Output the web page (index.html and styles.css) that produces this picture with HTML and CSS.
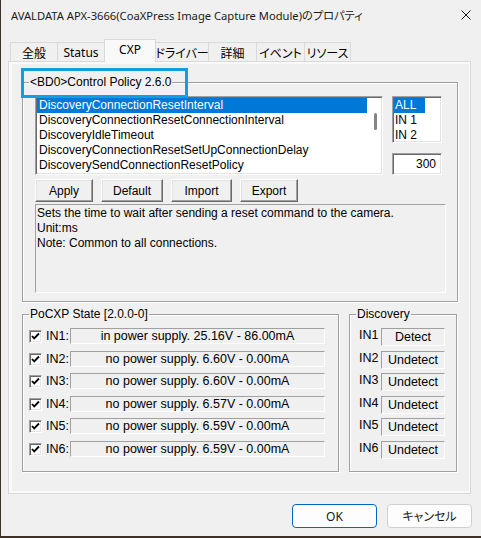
FILE: index.html
```html
<!DOCTYPE html>
<html lang="ja">
<head>
    <meta charset="UTF-8">
    <meta name="viewport" content="width=device-width, initial-scale=1.0">
    <title>AVALDATA APX-3666(CoaXPress Image Capture Module)のプロパティ</title>
    <link rel="stylesheet" href="styles.css">
</head>
<body>
    <div class="window">
        <div class="titlebar">
            <span class="title">AVALDATA APX-3666(CoaXPress Image Capture Module)のプロパティ</span>
            <span class="close">
                <svg width="10" height="10" viewBox="0 0 10 10"><path d="M0.5 0.5L9.5 9.5M9.5 0.5L0.5 9.5" stroke="#1a1a1a" stroke-width="1" fill="none"/></svg>
            </span>
        </div>

        <div class="tabs">
            <div class="tab w-general">全般</div>
            <div class="tab w-status">Status</div>
            <div class="tab active w-cxp">CXP</div>
            <div class="tab w-driver">ドライバー</div>
            <div class="tab w-detail">詳細</div>
            <div class="tab w-event">イベント</div>
            <div class="tab w-resource">リソース</div>
        </div>

        <div class="sheet">
            <div class="page">
                <fieldset class="group policy">
                    <legend class="marked">&lt;BD0&gt;Control Policy 2.6.0</legend>
                    <div class="policy-top">
                        <div class="listbox params">
                            <div class="items">
                                <div class="item selected">DiscoveryConnectionResetInterval</div>
                                <div class="item">DiscoveryConnectionResetConnectionInterval</div>
                                <div class="item">DiscoveryIdleTimeout</div>
                                <div class="item">DiscoveryConnectionResetSetUpConnectionDelay</div>
                                <div class="item">DiscoverySendConnectionResetPolicy</div>
                            </div>
                            <div class="vscroll"><div class="thumb"></div></div>
                        </div>
                        <div class="side">
                            <div class="listbox ports">
                                <div class="items">
                                    <div class="item selected">ALL</div>
                                    <div class="item">IN 1</div>
                                    <div class="item">IN 2</div>
                                </div>
                            </div>
                            <div class="edit">300</div>
                        </div>
                    </div>
                    <div class="actions">
                        <button class="btn w-apply">Apply</button>
                        <button class="btn w-default">Default</button>
                        <button class="btn w-import">Import</button>
                        <button class="btn w-export">Export</button>
                    </div>
                    <div class="desc">
                        Sets the time to wait after sending a reset command to the camera.<br>
                        Unit:ms<br>
                        Note: Common to all connections.
                    </div>
                </fieldset>

                <div class="lower">
                    <fieldset class="group pocxp">
                        <legend>PoCXP State [2.0.0-0]</legend>
                        <div class="rows">
                            <div class="row"><span class="check"><svg width="11" height="11" viewBox="0 0 11 11"><path d="M2 5L4.2 7.4L9 2.5" stroke="#000" stroke-width="1.8" fill="none"/></svg></span><span class="in-label">IN1:</span><span class="field wide">in power supply. 25.16V - 86.00mA</span></div>
                            <div class="row"><span class="check"><svg width="11" height="11" viewBox="0 0 11 11"><path d="M2 5L4.2 7.4L9 2.5" stroke="#000" stroke-width="1.8" fill="none"/></svg></span><span class="in-label">IN2:</span><span class="field wide">no power supply. 6.60V - 0.00mA</span></div>
                            <div class="row"><span class="check"><svg width="11" height="11" viewBox="0 0 11 11"><path d="M2 5L4.2 7.4L9 2.5" stroke="#000" stroke-width="1.8" fill="none"/></svg></span><span class="in-label">IN3:</span><span class="field wide">no power supply. 6.60V - 0.00mA</span></div>
                            <div class="row"><span class="check"><svg width="11" height="11" viewBox="0 0 11 11"><path d="M2 5L4.2 7.4L9 2.5" stroke="#000" stroke-width="1.8" fill="none"/></svg></span><span class="in-label">IN4:</span><span class="field wide">no power supply. 6.57V - 0.00mA</span></div>
                            <div class="row"><span class="check"><svg width="11" height="11" viewBox="0 0 11 11"><path d="M2 5L4.2 7.4L9 2.5" stroke="#000" stroke-width="1.8" fill="none"/></svg></span><span class="in-label">IN5:</span><span class="field wide">no power supply. 6.59V - 0.00mA</span></div>
                            <div class="row"><span class="check"><svg width="11" height="11" viewBox="0 0 11 11"><path d="M2 5L4.2 7.4L9 2.5" stroke="#000" stroke-width="1.8" fill="none"/></svg></span><span class="in-label">IN6:</span><span class="field wide">no power supply. 6.59V - 0.00mA</span></div>
                        </div>
                    </fieldset>

                    <fieldset class="group discovery">
                        <legend>Discovery</legend>
                        <div class="rows">
                            <div class="row"><span class="port">IN1</span><span class="field narrow">Detect</span></div>
                            <div class="row"><span class="port">IN2</span><span class="field narrow">Undetect</span></div>
                            <div class="row"><span class="port">IN3</span><span class="field narrow">Undetect</span></div>
                            <div class="row"><span class="port">IN4</span><span class="field narrow">Undetect</span></div>
                            <div class="row"><span class="port">IN5</span><span class="field narrow">Undetect</span></div>
                            <div class="row"><span class="port">IN6</span><span class="field narrow">Undetect</span></div>
                        </div>
                    </fieldset>
                </div>
            </div>
        </div>

        <div class="footer">
            <button class="dlg-btn default">OK</button>
            <button class="dlg-btn">キャンセル</button>
        </div>
    </div>
</body>
</html>
```

FILE: styles.css
```css
* {
    box-sizing: border-box;
}
body {
    margin: 0;
    background-color: #3e3128;
    font-family: "Liberation Sans", Arial, sans-serif;
    font-size: 12px;
    color: #000;
}
.window {
    margin-left: 1px;
    width: 480px;
    height: 536px;
    background-color: #f0f0f0;
    display: flex;
    flex-direction: column;
}

/* title bar */
.titlebar {
    height: 30px;
    display: flex;
    align-items: center;
    padding: 0 10px 0 10px;
    font-family: "Noto Sans", "Noto Sans CJK JP", sans-serif;
    font-size: 11.2px;
    font-feature-settings: "palt";
    color: #1a1a1a;
}
.title {
    flex: 1;
    white-space: nowrap;
}
.close {
    display: flex;
    width: 10px;
    height: 10px;
}

/* tab strip */
.tabs {
    display: flex;
    align-items: flex-end;
    height: 23px;
    margin-top: 9px;
    padding-left: 9px;
    font-family: "Noto Sans", "Noto Sans CJK JP", sans-serif;
    font-size: 12px;
    font-feature-settings: "palt";
    position: relative;
    z-index: 1;
}
.tab {
    flex-shrink: 0;
    height: 19px;
    margin-bottom: 1px;
    margin-right: -1px;
    border: 1px solid #d9d9d9;
    border-bottom: none;
    background-color: #f0f0f0;
    display: flex;
    align-items: center;
    justify-content: center;
    padding-top: 1px;
    white-space: nowrap;
}
.tab.active {
    height: 23px;
    margin-bottom: 0;
    background-color: #f9f9f9;
    padding-top: 0;
    padding-bottom: 3px;
    position: relative;
    z-index: 2;
}
.w-general { width: 48px; }
.w-status { width: 48px; }
.w-cxp { width: 52px; }
.w-driver { width: 54px; }
.w-detail { width: 49px; }
.w-event { width: 49px; }
.w-resource { width: 47px; }

/* property sheet */
.sheet {
    margin-top: -1px;
    margin-left: 7px;
    width: 463px;
    height: 433px;
    border: 1px solid #d9d9d9;
    background-color: #f9f9f9;
    padding: 2px 1px 2px 3px;
}
.page {
    height: 100%;
    background-color: #f0f0f0;
    padding: 11px 0 0 10px;
}

/* group boxes */
.group {
    margin: 0;
    border: 1px solid #a0a0a0;
    box-shadow: 1px 1px 0 #fff, inset 1px 1px 0 #fff;
    min-width: 0;
}
.group legend {
    padding: 0 1px;
    line-height: 14px;
    font-size: 12px;
}
.policy {
    width: 436px;
    padding: 7px 11px 8px 12px;
}
.policy legend {
    margin-left: -6px;
    position: relative;
}
.marked::before {
    content: "";
    position: absolute;
    left: -8px;
    top: -7px;
    width: 161px;
    height: 24px;
    border: 3px solid #139ee0;
}

.policy-top {
    display: flex;
    gap: 9px;
}
.listbox {
    background-color: #fff;
    border: 1px solid;
    border-color: #a0a0a0 #fff #fff #a0a0a0;
    box-shadow: inset 1px 1px 0 #696969, inset -1px -1px 0 #e3e3e3;
    padding: 1px;
    display: flex;
}
.params {
    width: 348px;
    height: 79px;
}
.params .items {
    flex: 1;
    overflow: hidden;
}
.item {
    height: 15px;
    line-height: 15px;
    padding-left: 2px;
    white-space: nowrap;
}
.item.selected {
    background-color: #0078d7;
    color: #fff;
}
.vscroll {
    width: 14px;
    padding: 15px 0 0 7px;
}
.thumb {
    width: 3px;
    height: 17px;
    border-radius: 2px;
    background-color: #858585;
}
.side {
    width: 50px;
    display: flex;
    flex-direction: column;
}
.ports {
    height: 47px;
}
.ports .items {
    width: 31px;
}
.ports .item {
    padding-left: 1px;
}
.edit {
    margin-top: 10px;
    height: 22px;
    background-color: #fff;
    border: 1px solid;
    border-color: #a0a0a0 #fff #fff #a0a0a0;
    box-shadow: inset 1px 1px 0 #696969, inset -1px -1px 0 #e3e3e3;
    text-align: right;
    padding-right: 5px;
    line-height: 20px;
}

.actions {
    display: flex;
    gap: 8px;
    margin-top: 4px;
}
.btn {
    height: 23px;
    font-family: "Liberation Sans", Arial, sans-serif;
    font-size: 12px;
    color: #000;
    background-color: #f0f0f0;
    border: 1px solid;
    border-color: #fff #696969 #696969 #fff;
    box-shadow: inset -1px -1px 0 #a0a0a0, inset 1px 1px 0 #e3e3e3;
    padding: 0;
}
.w-apply { width: 58px; }
.w-default { width: 62px; }
.w-import { width: 61px; }
.w-export { width: 58px; }

.desc {
    margin-top: 2px;
    width: 411px;
    height: 89px;
    border: 1px solid;
    border-color: #a0a0a0 #fff #fff #a0a0a0;
    padding: 1px 1px;
    line-height: 15px;
}

/* PoCXP / Discovery */
.lower {
    display: flex;
    gap: 10px;
    margin-top: 5px;
}
.pocxp {
    width: 317px;
    height: 165px;
    padding: 7px 13px 0 6px;
}
.discovery {
    width: 108px;
    height: 165px;
    padding: 7px 0 0 9px;
}
.discovery legend {
    margin-left: -3px;
}
.rows {
    display: flex;
    flex-direction: column;
}
.pocxp .rows {
    gap: 6px;
}
.discovery .rows {
    gap: 4px;
}
.rows .row:nth-child(odd) {
    margin-bottom: 1px;
}
.row {
    display: flex;
    align-items: center;
}
.pocxp .row {
    height: 16px;
}
.discovery .row {
    height: 18px;
}
.check {
    width: 13px;
    height: 13px;
    margin-right: 4px;
    background-color: #fff;
    border: 1px solid;
    border-color: #a0a0a0 #fff #fff #a0a0a0;
    box-shadow: inset 1px 1px 0 #696969, inset -1px -1px 0 #e3e3e3;
    display: flex;
    align-items: center;
    justify-content: center;
}
.in-label {
    width: 24px;
    font-size: 12.5px;
}
.port {
    width: 22px;
    font-size: 12.5px;
    align-self: flex-start;
}
.field {
    height: 100%;
    border: 1px solid;
    border-color: #a0a0a0 #fff #fff #a0a0a0;
    display: flex;
    align-items: center;
    justify-content: center;
    font-size: 12.5px;
    white-space: nowrap;
}
.field.wide {
    width: 255px;
}
.field.narrow {
    width: 64px;
}

/* dialog buttons */
.footer {
    display: flex;
    justify-content: flex-end;
    gap: 10px;
    padding: 10px 9px 0 0;
}
.dlg-btn {
    width: 85px;
    height: 24px;
    border-radius: 4px;
    border: 1px solid #d0d0d0;
    background-color: #fdfdfd;
    font-family: "Noto Sans", "Noto Sans CJK JP", sans-serif;
    font-size: 12px;
    font-feature-settings: "palt";
    color: #1a1a1a;
    padding: 0;
}
.dlg-btn.default {
    border-color: #0067c0;
}
```
